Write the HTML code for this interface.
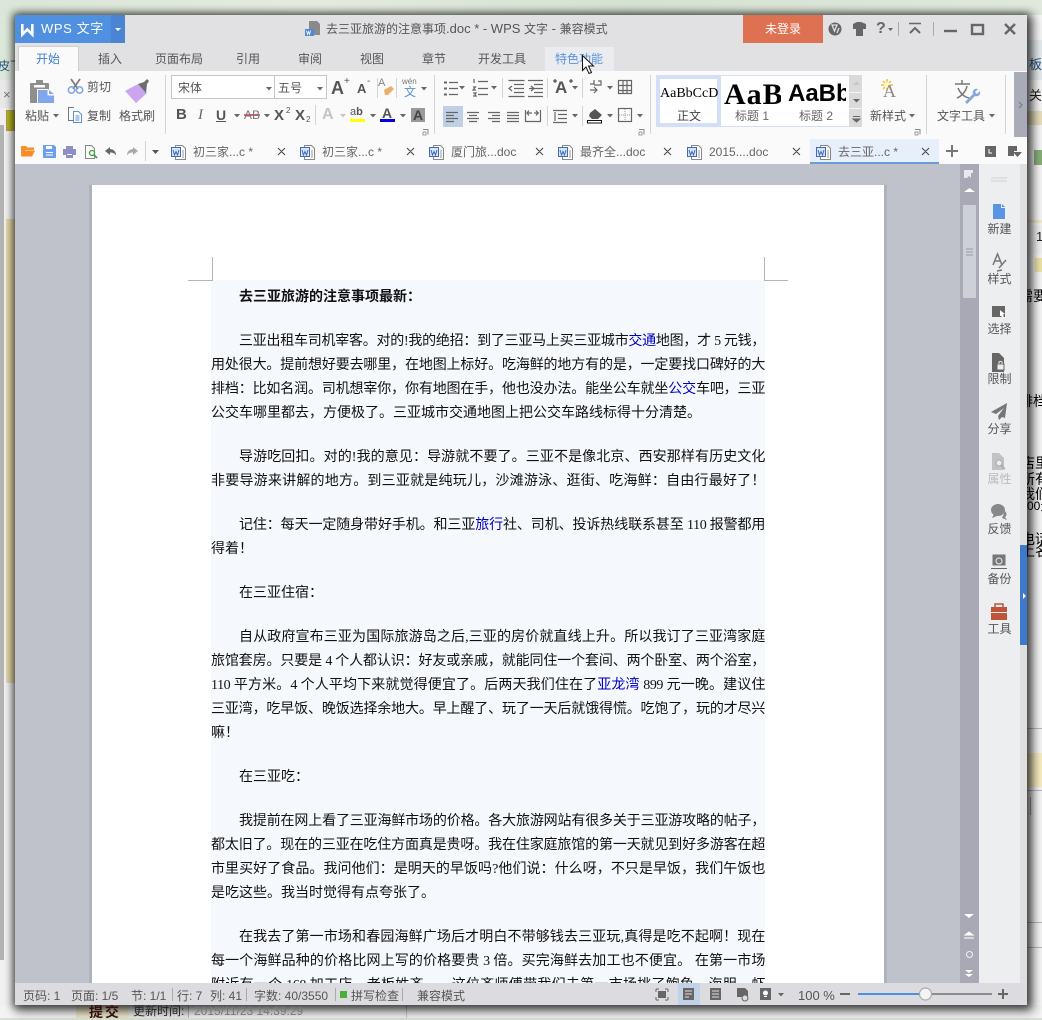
<!DOCTYPE html>
<html lang="zh"><head><meta charset="utf-8"><title>WPS 文字</title>
<style>
html,body{margin:0;padding:0;width:1042px;height:1020px;overflow:hidden;background:#dfe8dc}
*{box-sizing:border-box}
body{position:relative;font-family:"Liberation Sans","Noto Sans CJK SC",sans-serif;color:#555}
.a{position:absolute}
.t{position:absolute;white-space:nowrap;font-size:12px;line-height:16px;color:#555}
.m{position:absolute;white-space:nowrap;font-size:12px;line-height:16px;top:51px;color:#555}
.tb{position:absolute;white-space:nowrap;font-size:12px;line-height:16px;top:144px;color:#666}
.s{position:absolute;white-space:nowrap;font-size:12px;line-height:16px;top:988px;color:#555}
.n{position:absolute;left:979px;width:41px;text-align:center;font-size:12px;line-height:16px;color:#555}
.sep{position:absolute;width:1px;background:#d4d4d4}
.l{position:absolute;left:211px;width:554px;height:24px;line-height:24px;font-size:14px;color:#111;
font-family:"Liberation Serif","Noto Sans CJK SC",sans-serif;letter-spacing:-.4px;text-align:justify;text-align-last:justify}
.i{left:239px;width:526px}
.f{text-align:left;text-align-last:left;letter-spacing:0;white-space:nowrap}
.l a{color:#0000c0;text-decoration:none}
.bg{position:absolute;white-space:nowrap;font-size:14px;line-height:16px;color:#123}
</style></head><body>

<!-- background desktop -->
<div class="a" style="left:0;top:0;width:1042px;height:15px;background:linear-gradient(90deg,#dbe7d8,#e6ebe0 30%,#d5e3d2 60%,#e1e9dd)"></div>
<div class="a" style="left:0;top:15px;width:15px;height:65px;background:#dce8da"></div>
<div class="a" style="left:0;top:80px;width:15px;height:28px;background:#e9e9e9"></div>
<div class="a" style="left:0;top:108px;width:15px;height:912px;background:#f1f1f1"></div>
<div class="a" style="left:0;top:125px;width:4px;height:835px;background:#b3b3b3"></div>
<div class="a" style="left:6px;top:219px;width:9px;height:464px;background:#e5d9a9"></div>
<div class="a" style="left:6px;top:110px;width:9px;height:21px;background:#b5b520;border:1px solid #b89a5a"></div>
<div class="bg" style="left:-2px;top:58px;color:#24527f;font-size:12px">皮下</div>
<div class="bg" style="left:3px;top:87px;color:#777;font-size:13px">×</div>
<div class="a" style="left:1027px;top:15px;width:15px;height:990px;background:#f8f8f8"></div>
<div class="a" style="left:1027px;top:40px;width:15px;height:40px;background:#e8eef0"></div>
<div class="a" style="left:1027px;top:111px;width:15px;height:14px;background:#e9e0bc"></div>
<div class="a" style="left:1034px;top:150px;width:8px;height:15px;background:#8bb07a"></div>
<div class="a" style="left:1027px;top:220px;width:15px;height:3px;background:#f4ecc8"></div>
<div class="a" style="left:1027px;top:225px;width:15px;height:28px;background:#f4f4f4"></div>
<div class="a" style="left:1035px;top:258px;width:7px;height:14px;background:#f0e6a8"></div>
<div class="a" style="left:1027px;top:728px;width:15px;height:1px;background:#bbb"></div>
<div class="a" style="left:1027px;top:753px;width:15px;height:34px;background:#fbefc4"></div>
<div class="a" style="left:1027px;top:790px;width:15px;height:1px;background:#bbb"></div>
<div class="a" style="left:1030px;top:797px;width:1px;height:18px;background:#aaa"></div>
<div class="a" style="left:1027px;top:922px;width:15px;height:1px;background:#bbb"></div>
<div class="a" style="left:1027px;top:947px;width:15px;height:1px;background:#bbb"></div>
<div class="bg" style="left:1029px;top:57px;color:#24527f;font-size:13px">板</div>
<div class="bg" style="left:1029px;top:88px;font-size:13px;color:#222">关扌</div>
<div class="bg" style="left:1036px;top:229px;font-size:13px;color:#222">1</div>
<div class="bg" style="left:1019px;top:288px;color:#000">需要</div>
<div class="bg" style="left:1019px;top:393px;color:#000">排档</div>
<div class="bg" style="left:1021px;top:455px;color:#000">店里</div>
<div class="bg" style="left:1021px;top:471px;color:#000">所有</div>
<div class="bg" style="left:1021px;top:486px;color:#000">我们</div>
<div class="bg" style="left:1027px;top:498px;color:#000;font-size:12px">00元</div>
<div class="bg" style="left:1021px;top:531px;color:#000">电话</div>
<div class="bg" style="left:1021px;top:543px;color:#000">上名</div>

<!-- bottom strip -->
<div class="a" style="left:0;top:1005px;width:1042px;height:13px;background:#f4f4f4"></div>
<div class="a" style="left:0;top:1018px;width:1042px;height:2px;background:#d8e5d5"></div>
<div class="a" style="left:76px;top:1005px;width:53px;height:13px;background:#efe6c9"></div>
<div class="a" style="left:129px;top:1005px;width:59px;height:13px;background:#ececec"></div>
<div class="a" style="left:188px;top:1005px;width:1px;height:13px;background:#bbb"></div>
<div class="a" style="left:406px;top:1005px;width:1px;height:13px;background:#ccc"></div>

<!-- window -->
<div class="a" style="left:15px;top:15px;width:1012px;height:990px;background:#e1e1e4;box-shadow:3px 3px 10px 3px rgba(0,0,0,.6),0 0 7px 2px rgba(0,0,0,.45)"></div>
<div class="t" style="left:89px;top:1004px;font-size:14px;font-weight:bold;color:#301010;letter-spacing:2px;height:14px;overflow:hidden">提交</div>
<div class="t" style="left:133px;top:1003px;color:#222">更新时间:</div>
<div class="t" style="left:194px;top:1003px;color:#777">2015/11/23 14:39:29</div>
<div class="a" style="left:15px;top:15px;width:96px;height:28px;background:#4f90e0"></div>
<div class="a" style="left:111px;top:15px;width:14px;height:28px;background:#4a84d2"></div>
<div class="a" style="left:743px;top:15px;width:80px;height:28px;background:#df7153"></div>
<div class="a" style="left:545px;top:47px;width:69px;height:24px;background:#eaecef"></div>
<div class="a" style="left:15px;top:71px;width:1012px;height:93px;background:#fafafa"></div>
<div class="a" style="left:18px;top:46px;width:61px;height:25px;background:#fafafa;border:1px solid #cfcfcf;border-bottom:none"></div>
<div class="a" style="left:1014px;top:72px;width:13px;height:65px;background:#a9acb8"></div>
<div class="a" style="left:443px;top:106px;width:20px;height:21px;background:#bfd0e6"></div>

<!-- ribbon separators -->
<div class="sep" style="left:165px;top:75px;height:59px"></div>
<div class="sep" style="left:434px;top:75px;height:59px"></div>
<div class="sep" style="left:650px;top:75px;height:59px"></div>
<div class="sep" style="left:926px;top:75px;height:59px"></div>
<div class="sep" style="left:1005px;top:75px;height:59px"></div>
<div class="sep" style="left:377px;top:78px;height:20px"></div>
<div class="sep" style="left:396px;top:78px;height:20px"></div>
<div class="sep" style="left:315px;top:105px;height:20px"></div>
<div class="sep" style="left:502px;top:78px;height:20px"></div>
<div class="sep" style="left:547px;top:78px;height:20px"></div>
<div class="sep" style="left:582px;top:78px;height:20px"></div>
<div class="sep" style="left:547px;top:106px;height:20px"></div>
<div class="sep" style="left:582px;top:106px;height:20px"></div>

<!-- gallery -->
<div class="a" style="left:656px;top:75px;width:206px;height:52px;background:#dadada"></div>
<div class="a" style="left:656px;top:75px;width:193px;height:52px;background:#fff;border:1px solid #d5dff3;border-width:1px 0 1px 1px"></div>
<div class="a" style="left:656px;top:75px;width:65px;height:52px;background:#fff;border:4px solid #d2dff6"></div>
<div class="a" style="left:849px;top:92px;width:13px;height:1px;background:#f5f5f5"></div>
<div class="a" style="left:849px;top:108px;width:13px;height:1px;background:#f5f5f5"></div>
<div class="a" style="left:660px;top:84px;width:58px;height:20px;overflow:hidden;font:14px/20px 'Liberation Serif',serif;color:#000;white-space:nowrap;text-align:center">AaBbCcD</div>
<div class="a" style="left:724px;top:79px;width:57px;height:32px;overflow:hidden;font:bold 30px/32px 'Liberation Serif',serif;color:#000;white-space:nowrap;letter-spacing:1px">AaBb</div>
<div class="a" style="left:788px;top:80px;width:58px;height:28px;overflow:hidden;font:bold 24px/28px 'Liberation Sans',sans-serif;color:#000;white-space:nowrap">AaBbC</div>

<!-- doc area -->
<div class="a" style="left:15px;top:164px;width:945px;height:819px;background:#bfc2cb"></div>
<div class="a" style="left:960px;top:164px;width:19px;height:819px;background:#a8a9b4"></div>
<div class="a" style="left:963px;top:205px;width:13px;height:93px;background:#cdd0d6"></div>
<div class="a" style="left:979px;top:164px;width:41px;height:819px;background:#eceef0"></div>
<div class="a" style="left:1020px;top:164px;width:7px;height:819px;background:#dfdfe2"></div>
<div class="a" style="left:1020px;top:545px;width:7px;height:100px;background:#3d7acb"></div>
<div class="a" style="left:89px;top:185px;width:3px;height:798px;background:#afb1bb"></div>
<div class="a" style="left:92px;top:185px;width:792px;height:798px;background:#fff"></div>
<div class="a" style="left:884px;top:185px;width:3px;height:798px;background:#afb1bb"></div>
<div class="a" style="left:211px;top:280px;width:554px;height:703px;background:#f5f8fd"></div>
<div class="a" style="left:212px;top:257px;width:1px;height:24px;background:#b5b5b5"></div>
<div class="a" style="left:188px;top:280px;width:24px;height:1px;background:#b5b5b5"></div>
<div class="a" style="left:764px;top:257px;width:1px;height:24px;background:#b5b5b5"></div>
<div class="a" style="left:765px;top:280px;width:23px;height:1px;background:#b5b5b5"></div>

<!-- document text -->
<div class="l i f" style="top:286px;font-weight:bold">去三亚旅游的注意事项最新：</div>
<div class="l i" style="top:330px">三亚出租车司机宰客。对的!我的绝招：到了三亚马上买三亚城市<a>交通</a>地图，才 5 元钱，</div>
<div class="l" style="top:354px">用处很大。提前想好要去哪里，在地图上标好。吃海鲜的地方有的是，一定要找口碑好的大</div>
<div class="l" style="top:378px">排档：比如名润。司机想宰你，你有地图在手，他也没办法。能坐公车就坐<a>公交</a>车吧，三亚</div>
<div class="l f" style="top:402px">公交车哪里都去，方便极了。三亚城市交通地图上把公交车路线标得十分清楚。</div>
<div class="l i" style="top:446px">导游吃回扣。对的!我的意见：导游就不要了。三亚不是像北京、西安那样有历史文化</div>
<div class="l" style="top:470px">非要导游来讲解的地方。到三亚就是纯玩儿，沙滩游泳、逛街、吃海鲜：自由行最好了！</div>
<div class="l i" style="top:514px">记住：每天一定随身带好手机。和三亚<a>旅行</a>社、司机、投诉热线联系甚至 110 报警都用</div>
<div class="l f" style="top:538px">得着！</div>
<div class="l i f" style="top:582px">在三亚住宿：</div>
<div class="l i" style="top:626px">自从政府宣布三亚为国际旅游岛之后,三亚的房价就直线上升。所以我订了三亚湾家庭</div>
<div class="l" style="top:650px">旅馆套房。只要是 4 个人都认识：好友或亲戚，就能同住一个套间、两个卧室、两个浴室，</div>
<div class="l" style="top:674px">110 平方米。4 个人平均下来就觉得便宜了。后两天我们住在了<a>亚龙湾</a> 899 元一晚。建议住</div>
<div class="l" style="top:698px">三亚湾，吃早饭、晚饭选择余地大。早上醒了、玩了一天后就饿得慌。吃饱了，玩的才尽兴</div>
<div class="l f" style="top:722px">嘛！</div>
<div class="l i f" style="top:766px">在三亚吃：</div>
<div class="l i" style="top:810px">我提前在网上看了三亚海鲜市场的价格。各大旅游网站有很多关于三亚游攻略的帖子，</div>
<div class="l" style="top:834px">都太旧了。现在的三亚在吃住方面真是贵呀。我在住家庭旅馆的第一天就见到好多游客在超</div>
<div class="l" style="top:858px">市里买好了食品。我问他们：是明天的早饭吗?他们说：什么呀，不只是早饭，我们午饭也</div>
<div class="l f" style="top:882px">是吃这些。我当时觉得有点夸张了。</div>
<div class="l i" style="top:926px">在我去了第一市场和春园海鲜广场后才明白不带够钱去三亚玩,真得是吃不起啊！现在</div>
<div class="l" style="top:950px">每一个海鲜品种的价格比网上写的价格要贵 3 倍。买完海鲜去加工也不便宜。 在第一市场</div>
<div class="l" style="top:974px">附近有一个 168 加工店，老板姓齐……这位齐师傅带我们去第一市场挑了鲍鱼、海胆、虾</div>

<!-- status bar -->
<div class="a" style="left:15px;top:983px;width:1012px;height:22px;background:#dcdce0"></div>
<div class="a" style="left:678px;top:983px;width:22px;height:22px;background:#c0d1e8"></div>
<div class="s" style="left:23px">页码: 1</div>
<div class="s" style="left:71px">页面: 1/5</div>
<div class="s" style="left:131px">节: 1/1</div>
<div class="s" style="left:177px">行: 7</div>
<div class="s" style="left:210px">列: 41</div>
<div class="s" style="left:254px">字数: 40/3550</div>
<div class="s" style="left:351px">拼写检查</div>
<div class="s" style="left:417px">兼容模式</div>
<div class="s" style="left:798px;font-size:13px">100 %</div>
<div class="a" style="left:172px;top:988px;width:1px;height:13px;background:#aaa"></div>
<div class="a" style="left:246px;top:988px;width:1px;height:13px;background:#aaa"></div>
<div class="a" style="left:335px;top:988px;width:1px;height:13px;background:#aaa"></div>
<div class="a" style="left:402px;top:988px;width:1px;height:13px;background:#aaa"></div>
<div class="a" style="left:340px;top:991px;width:7px;height:7px;background:#4caf3a"></div>

<!-- icons -->
<svg class="a" style="left:0;top:0" width="1042" height="1020" viewBox="0 0 1042 1020" fill="none">
<defs>
<symbol id="doc" viewBox="0 0 15 15" overflow="visible">
<path d="M4.500.5h7l3 3v11h-10z" fill="#fff" stroke="#888"/>
<path d="M11 6h2M11 8h2M11 10h2M11 12h2" stroke="#999"/>
<rect x=".5" y="2.500" width="9" height="9" fill="#d9e4f6" stroke="#3f6cb8"/>
<path d="M2 5l1.500 5L5 6.500 6.500 10 8 5" stroke="#3f6cb8" stroke-width="1"/>
</symbol>
<symbol id="dn" viewBox="0 0 6 4" overflow="visible"><path d="M0 0h6L3 3.500z" fill="#666"/></symbol>
</defs>

<!-- WPS logo -->
<path d="M22.300 24v10.500l5-5 5 5V24" stroke="#fff" stroke-width="2.600"/>
<path d="M115 28h6l-3 3z" fill="#fff"/>
<!-- title icon -->
<path d="M309 21h8l3 3v11h-11z" fill="#8a8a8a"/><rect x="305" y="29" width="9" height="7" fill="#4f8ad8"/><path d="M306.500 30.500l1 4 1-3 1 3 1-4" stroke="#fff" stroke-width=".8"/>
<!-- top right -->
<circle cx="835" cy="29" r="6.500" fill="#666"/><path d="M832 25l5 0-2.500 6zM839 28l-2 5" stroke="#e1e1e4" stroke-width="1.300"/>
<path d="M853 24l4-2h4l5 2v5h-3v7h-7v-7h-3z" fill="#666"/>
<path d="M888 28h5l-2.500 3z" fill="#666"/>
<path d="M898.500 22v14M933.500 22v14" stroke="#aaa"/>
<path d="M909 23.500h12" stroke="#666" stroke-width="1.500"/><path d="M910 33l5-5 5 5" stroke="#666" stroke-width="2"/>
<path d="M944 31h13" stroke="#666" stroke-width="2.400"/>
<rect x="972" y="25" width="11" height="9" stroke="#666" stroke-width="2.400"/>
<path d="M1005 24l10 10M1015 24l-10 10" stroke="#666" stroke-width="2.400"/>

<!-- paste -->
<rect x="30" y="83" width="19" height="20" rx="1" fill="#8e8e8e"/><rect x="36" y="80" width="7" height="5" fill="#8e8e8e"/><rect x="34" y="85" width="11" height="2.500" fill="#fafafa"/>
<path d="M37 89h11l6 6v9H37z" fill="#fafafa"/><path d="M38 90h9.500v5.500H54V103H38z" fill="#82a6ea"/><path d="M49 90l5 4h-5z" fill="#82a6ea"/>
<use href="#dn" x="53" y="114" width="6" height="4"/>
<!-- scissors -->
<path d="M71 79l7 10M80 79l-7 10" stroke="#7d7d7d" stroke-width="1.800"/><circle cx="71.500" cy="90" r="3.200" stroke="#7ca2e0" stroke-width="1.500"/><circle cx="79.500" cy="90" r="3.200" stroke="#7ca2e0" stroke-width="1.500"/>
<!-- copy -->
<path d="M74 107.500h-5.500v13H73" stroke="#777"/><path d="M73.500 111.500h5l3 3v8h-8z" stroke="#5f8fd8" fill="#fff"/><path d="M75.500 116h4M75.500 118h4M75.500 120h4" stroke="#5f8fd8"/>
<!-- brush -->
<path d="M125 91l13-7 9 9-11 10z" fill="#cba5f0"/><path d="M138 84l6-2 3-3 2 2-2 3-1 9z" fill="#6e6e6e"/>
<!-- font dropdowns -->
<rect x="171.500" y="75.500" width="155" height="23" fill="#fff" stroke="#c6c6c6"/><path d="M274.500 76v23" stroke="#c6c6c6"/>
<use href="#dn" x="266" y="87" width="6" height="4"/><use href="#dn" x="317" y="87" width="6" height="4"/>
<!-- eraser -->
<path d="M384 90l7-4 3 3-6 6h-3z" fill="#eab06a"/>
<use href="#dn" x="421" y="87" width="6" height="4"/>
<!-- row2 arrows -->
<use href="#dn" x="234" y="114" width="6" height="4"/><use href="#dn" x="264" y="114" width="6" height="4"/><use href="#dn" x="340" y="114" width="6" height="4" opacity=".35"/><use href="#dn" x="370" y="114" width="6" height="4"/><use href="#dn" x="400" y="114" width="6" height="4"/>
<path d="M244 115h16" stroke="#e03030" stroke-width="1.500"/>
<rect x="350" y="119" width="15" height="3" fill="#ffff00"/>
<rect x="380" y="119" width="15" height="3" fill="#0000e0"/>
<rect x="411" y="108" width="14" height="14" fill="#999"/>
<path d="M423 129.500h5v5" stroke="#888"/><rect x="423" y="132" width="3" height="3" stroke="#888" stroke-width=".8"/>
<path d="M639 129.500h5v5" stroke="#888"/><rect x="639" y="132" width="3" height="3" stroke="#888" stroke-width=".8"/>
<path d="M915 129.500h5v5" stroke="#888"/><rect x="915" y="132" width="3" height="3" stroke="#888" stroke-width=".8"/>
<!-- paragraph group -->
<g stroke="#666" stroke-width="1.200">
<path d="M449 82.500h9M449 88.500h9M449 94.500h9"/><path d="M444 82.500h3M444 88.500h3M444 94.500h3" stroke-width="2"/>
<path d="M478 81.500h10M478 88.500h10M478 94.500h10"/><path d="M474 79v4M473 87h2.500l-2.500 3h3M473 93h3l-1 1.500 1 1.500h-3"/>
<path d="M508.500 80.500h16M514 84.500h10M514 88.500h10M514 92.500h10M508.500 96.500h16M512 86l-3 2.500 3 2.500"/>
<path d="M528 80.500h15M534 84.500h9M534 88.500h9M534 92.500h9M528 96.500h15M529 88.500h4M531 86l3 2.500-3 2.500"/>
<path d="M594 80l0 4h-4M598 81h3v4h-7M590 90h7M594 87l3 3-3 3"/>
<path d="M618.500 80.500h13v13h-13zM618.500 85.500h13M618.500 90.500h13M623 80.500v13M627 80.500v13"/>
<path d="M446 112.500h12M446 115.500h8M446 118.500h12M446 121.500h8"/>
<path d="M467 112.500h12M469 115.500h8M467 118.500h12M469 121.500h8"/>
<path d="M488 112.500h12M492 115.500h8M488 118.500h12M492 121.500h8"/>
<path d="M507 112.500h12M507 115.500h12M507 118.500h12M507 121.500h12"/>
<path d="M525.500 110v11M540.500 110v11M525 121.500h16M527 113h5M534 113h5M529 110.500l-2 2.500 2 2.500M536 110.500l2 2.500-2 2.500"/>
<path d="M553 110.500h14M558 114.500h9M558 118.500h9M553 122.500h14M555 112v9"/>
<rect x="618.500" y="108.500" width="13" height="13"/>
</g>
<path d="M625 109v12M619 115h12" stroke="#999" stroke-dasharray="1 1"/>
<use href="#dn" x="459" y="86" width="6" height="4"/><use href="#dn" x="491" y="86" width="6" height="4"/><use href="#dn" x="572" y="86" width="6" height="4"/><use href="#dn" x="607" y="86" width="6" height="4"/><use href="#dn" x="572" y="114" width="6" height="4"/><use href="#dn" x="607" y="114" width="6" height="4"/><use href="#dn" x="637" y="114" width="6" height="4"/>
<path d="M590 113l5-4 7 6-4 4h-6l-3-3z" fill="#555"/><rect x="587.500" y="120.500" width="14" height="2.500" fill="#fff" stroke="#111"/>
<path d="M553 81l4 0M555 79v4M569 81h4M571 79v4" stroke="#333"/>
<!-- gallery arrows -->
<path d="M853 85l3.500-4 3.500 4z" fill="#c8c8c8"/><path d="M853 99h7l-3.500 3.500z" fill="#666"/><path d="M853 116.500h7M853 119h7l-3.500 3z" stroke="#666" fill="#666"/>
<use href="#dn" x="909" y="114" width="6" height="4"/><use href="#dn" x="989" y="114" width="6" height="4"/>
<!-- new style icon -->
<path d="M887 79v12M881 85h12M883 81l8 8M891 81l-8 8" stroke="#f3c23a" stroke-width="1.500"/><circle cx="887" cy="85" r="3" fill="#fff6c8"/>
<!-- text tools -->
<path d="M955 84h15M962 80v4M958 88c2 5 6 9 11 10M967 86c-1 5-5 10-10 12" stroke="#777" stroke-width="1.500"/>
<path d="M965 102l8-8c-1-3 1-6 5-5l-3 3 2 2 3-3c1 4-2 6-5 5l-8 8z" fill="#8ba6d8"/>
<path d="M1019 102l3 3-3 3" stroke="#777"/>
<!-- quick bar -->
<path d="M21 156v-10h5l1.500 1.500H34V150H25z" fill="#f5922e"/><path d="M24 150.500h11l-3 6H21z" fill="#fb8a24"/>
<path d="M43 145h11l2 2v11H43z" fill="#6e9fe8"/><rect x="46" y="146" width="6" height="3" fill="#fff"/><path d="M46 152.500h7M46 155h7" stroke="#fff"/>
<path d="M66 146h7v3h-7z" fill="#8d8dc8"/><path d="M63 149h13v6h-3v3h-7v-3h-3z" fill="#8d8dc8"/><path d="M67 154.500h5" stroke="#fff"/>
<path d="M85.500 145.500h6l3 3v10h-9z" stroke="#888"/><circle cx="92" cy="153" r="2.500" stroke="#46a046" stroke-width="1.300"/><path d="M94 155l3 3" stroke="#46a046" stroke-width="1.800"/>
<path d="M110 147l-5 4 5 4v-2.500c3 0 5 1 6 3 0-4-2-6-6-6.500z" fill="#666"/>
<path d="M133 147l5 4-5 4v-2.500c-3 0-5 1-6 3 0-4 2-6 6-6.500z" fill="#aaa"/>
<path d="M145.500 141v20" stroke="#d4d4d4"/><path d="M152 150h7l-3.500 4z" fill="#555"/>
<use href="#doc" x="171" y="145" width="15" height="15"/><use href="#doc" x="300" y="145" width="15" height="15"/><use href="#doc" x="429" y="145" width="15" height="15"/><use href="#doc" x="558" y="145" width="15" height="15"/>
<use href="#doc" x="687" y="145" width="15" height="15"/>
<rect x="810" y="139" width="129" height="23" fill="#e7effa"/><rect x="810" y="162" width="129" height="2" fill="#6c9cd8"/>
<use href="#doc" x="816" y="145" width="15" height="15"/>
<g stroke="#444"><path d="M278 148l7 7M285 148l-7 7M407 148l7 7M414 148l-7 7M536 148l7 7M543 148l-7 7M664 148l7 7M671 148l-7 7M793 148l7 7M800 148l-7 7M922 148l7 7M929 148l-7 7"/></g>
<path d="M946 151h12M952 145v12" stroke="#777" stroke-width="2"/>
<rect x="985" y="146" width="11" height="11" fill="#666"/><path d="M989 149v4h3" stroke="#fff"/>
<path d="M1008 146h9v5h-3v5h-6z" fill="#666"/><path d="M1013 152h9l-4.500 5z" fill="#666"/>
<!-- scrollbar -->
<path d="M964 170h9v3h-2v5l-2-2-2 2-3 0z" fill="#e8e8ee"/>
<path d="M964 192l5.500-4 5.500 4z" fill="#fff"/>
<path d="M966 249h7M966 252h7M966 255h7" stroke="#9a9ca4"/>
<path d="M964 914h10l-5 4z" fill="#fff"/>
<path d="M965 935l4-3 4 3zM964 938h10" stroke="#fff" fill="#fff" stroke-width="1"/>
<circle cx="969.500" cy="954.500" r="3" stroke="#f2f2f2" stroke-width="1"/>
<path d="M965 970h8l-4 3zM965 974h8l-4 3z" fill="#fff"/>
<!-- sidebar -->
<path d="M991 178h16" stroke="#d0d0d0"/><path d="M991 181h16" stroke="#d0d0d0"/>
<path d="M993 204h8v4h4v11h-12zM1002 204l3 3h-3z" fill="#5a94e6"/>
<path d="M993 265l4.500-11 4.500 11M995 261h5" stroke="#777" stroke-width="1.500"/><path d="M999 268l7-8M997 271l5-1" stroke="#777" stroke-width="1.500"/>
<rect x="992" y="306" width="13" height="11" fill="#666"/><path d="M1000 310l5 4-2 .500 1 3h-1l-3-2z" fill="#fff"/>
<path d="M992 353h7l5 5v14h-12z" fill="#666"/><rect x="997" y="364" width="7" height="6" fill="#eee" stroke="#666"/><path d="M999 364v-2a2 2 0 0 1 3 0v2" stroke="#eee"/>
<path d="M1007 403l-16 9 5 2 8-6-6 8 1 4 3-3 3 1z" fill="#777"/>
<path d="M992 453h7l5 5v12h-12z" fill="#c2c2c2"/><circle cx="999" cy="463" r="3" fill="#eee" stroke="#aaa"/><path d="M1001 465l4 4" stroke="#aaa" stroke-width="1.500"/>
<ellipse cx="998" cy="510" rx="7" ry="6" fill="#888"/><path d="M994 514l-2 4 5-2z" fill="#888"/><path d="M1005 511c2 2 2 5 0 6l2 3-5-2z" fill="#888"/>
<rect x="992.500" y="554.500" width="13" height="11" fill="#777"/><path d="M991 568.500h16" stroke="#666"/><circle cx="999" cy="561" r="3" stroke="#eee"/>
<path d="M995 607v-3h8v3" stroke="#b9533a" stroke-width="1.500"/><rect x="991" y="607" width="16" height="13" fill="#c0543a"/><path d="M991 612.500h16" stroke="#eee"/>
<path d="M1023 593v6l3-3z" fill="#fff"/>
<!-- status icons -->
<path d="M656 989h3M656 989v3M668 989h-3M668 989v3M656 1000h3M656 1000v-3M668 1000h-3M668 1000v-3" stroke="#666"/><rect x="658" y="991" width="8" height="7" fill="#666"/>
<rect x="683" y="988" width="11" height="12" fill="#666"/><path d="M685 991h7M685 994h7M685 997h4" stroke="#ddd"/>
<rect x="710" y="988" width="11" height="12" fill="#666"/><path d="M712 991h7M712 994h7M712 997h7" stroke="#ddd"/>
<path d="M737 988h8l3 3v6h-11z" fill="#666"/><circle cx="745" cy="998" r="3" fill="#ddd" stroke="#666"/>
<rect x="760" y="988" width="11" height="12" fill="#666"/><circle cx="765.500" cy="993" r="2.500" fill="#fff"/><path d="M764 996.500h3" stroke="#fff"/>
<use href="#dn" x="778" y="993" width="6" height="4"/>
<path d="M840 994h10" stroke="#666" stroke-width="2"/>
<path d="M858 994h134" stroke="#8c8c90" stroke-width="2"/><path d="M858 994h62" stroke="#4c8fe6" stroke-width="2"/>
<circle cx="925.500" cy="994" r="6" fill="#f4f4f4" stroke="#aaa" stroke-width="1.200"/>
<path d="M998 994h10M1003 989v10" stroke="#666" stroke-width="2"/>
</svg>

<!-- title text -->
<div class="t" style="left:41px;top:21px;font-size:13px;color:#fff;letter-spacing:.6px">WPS 文字</div>
<div class="t" style="left:326px;top:21px;font-size:12px;color:#555">去三亚旅游的注意事项<span style="font-size:13px">.doc * - WPS </span>文字<span style="font-size:13px"> - </span>兼容模式</div>
<div class="t" style="left:743px;top:21px;width:80px;text-align:center;color:#fff">未登录</div>
<div class="t" style="left:876px;top:21px;font-size:16px;color:#666;font-weight:bold">?</div>

<!-- menu tabs -->
<div class="m" style="left:36px;color:#3f7fd4">开始</div>
<div class="m" style="left:98px">插入</div>
<div class="m" style="left:155px">页面布局</div>
<div class="m" style="left:236px">引用</div>
<div class="m" style="left:298px">审阅</div>
<div class="m" style="left:360px">视图</div>
<div class="m" style="left:422px">章节</div>
<div class="m" style="left:478px">开发工具</div>
<div class="m" style="left:555px;color:#5c93dc">特色功能</div>

<!-- ribbon text -->
<div class="t" style="left:25px;top:108px">粘贴</div>
<div class="t" style="left:87px;top:79px">剪切</div>
<div class="t" style="left:87px;top:108px">复制</div>
<div class="t" style="left:119px;top:108px">格式刷</div>
<div class="t" style="left:178px;top:80px">宋体</div>
<div class="t" style="left:278px;top:80px">五号</div>
<div class="t" style="left:331px;top:80px;font-size:18px;font-weight:bold;color:#555">A</div>
<div class="t" style="left:344px;top:74px;font-size:10px;color:#555">+</div>
<div class="t" style="left:357px;top:81px;font-size:13px;font-weight:bold;color:#555">A</div>
<div class="t" style="left:367px;top:74px;font-size:10px;color:#555">-</div>
<div class="t" style="left:378px;top:75px;font-size:11px;color:#888">A</div>
<div class="t" style="left:402px;top:74px;font-size:8px;color:#777">wén</div>
<div class="t" style="left:404px;top:84px;font-size:12px;color:#5d8fd8">文</div>
<div class="t" style="left:176px;top:107px;font:bold 15px/16px 'Liberation Sans',sans-serif;color:#555">B</div>
<div class="t" style="left:198px;top:107px;font:italic 15px/16px 'Liberation Serif',serif;color:#666">I</div>
<div class="t" style="left:216px;top:107px;font-size:14px;font-weight:bold;text-decoration:underline;color:#555">U</div>
<div class="t" style="left:244px;top:107px;font-size:12px;color:#777">AB</div>
<div class="t" style="left:274px;top:108px;font-size:15px;font-weight:bold;color:#555">X</div>
<div class="t" style="left:286px;top:103px;font-size:8px;color:#555">2</div>
<div class="t" style="left:295px;top:108px;font-size:15px;font-weight:bold;color:#555">X</div>
<div class="t" style="left:306px;top:112px;font-size:8px;color:#555">2</div>
<div class="t" style="left:322px;top:107px;font-size:16px;font-weight:bold;color:#c4c4c4">A</div>
<div class="t" style="left:350px;top:104px;font-size:11px;color:#555">a<b>b</b></div>
<div class="t" style="left:382px;top:105px;font-size:14px;font-weight:bold;color:#555">A</div>
<div class="t" style="left:413px;top:107px;font-size:14px;font-weight:bold;color:#444">A</div>
<div class="t" style="left:555px;top:80px;font-size:17px;font-weight:bold;color:#555">A</div>
<div class="t" style="left:883px;top:83px;font-size:18px;font-family:'Liberation Serif',serif;color:#888">A</div>
<div class="t" style="left:677px;top:108px;color:#444">正文</div>
<div class="t" style="left:735px;top:108px;color:#666">标题 1</div>
<div class="t" style="left:799px;top:108px;color:#666">标题 2</div>
<div class="t" style="left:870px;top:108px">新样式</div>
<div class="t" style="left:937px;top:108px">文字工具</div>

<!-- doc tabs -->
<div class="tb" style="left:193px">初三家...c *</div>
<div class="tb" style="left:322px">初三家...c *</div>
<div class="tb" style="left:451px">厦门旅...doc</div>
<div class="tb" style="left:580px">最齐全...doc</div>
<div class="tb" style="left:709px">2015....doc</div>
<div class="tb" style="left:838px">去三亚...c *</div>

<!-- sidebar labels -->
<div class="n" style="top:221px">新建</div>
<div class="n" style="top:271px">样式</div>
<div class="n" style="top:321px">选择</div>
<div class="n" style="top:371px">限制</div>
<div class="n" style="top:421px">分享</div>
<div class="n" style="top:471px;color:#bbb">属性</div>
<div class="n" style="top:521px">反馈</div>
<div class="n" style="top:571px">备份</div>
<div class="n" style="top:621px">工具</div>

<!-- cursor -->
<svg class="a" style="left:580px;top:54px" width="16" height="22" viewBox="0 0 16 22"><path d="M2.500 1.500v15l3.500-3.500 3 6.500 2.500-1-3-6.500h5z" fill="#fff" stroke="#111"/></svg>
</body></html>
